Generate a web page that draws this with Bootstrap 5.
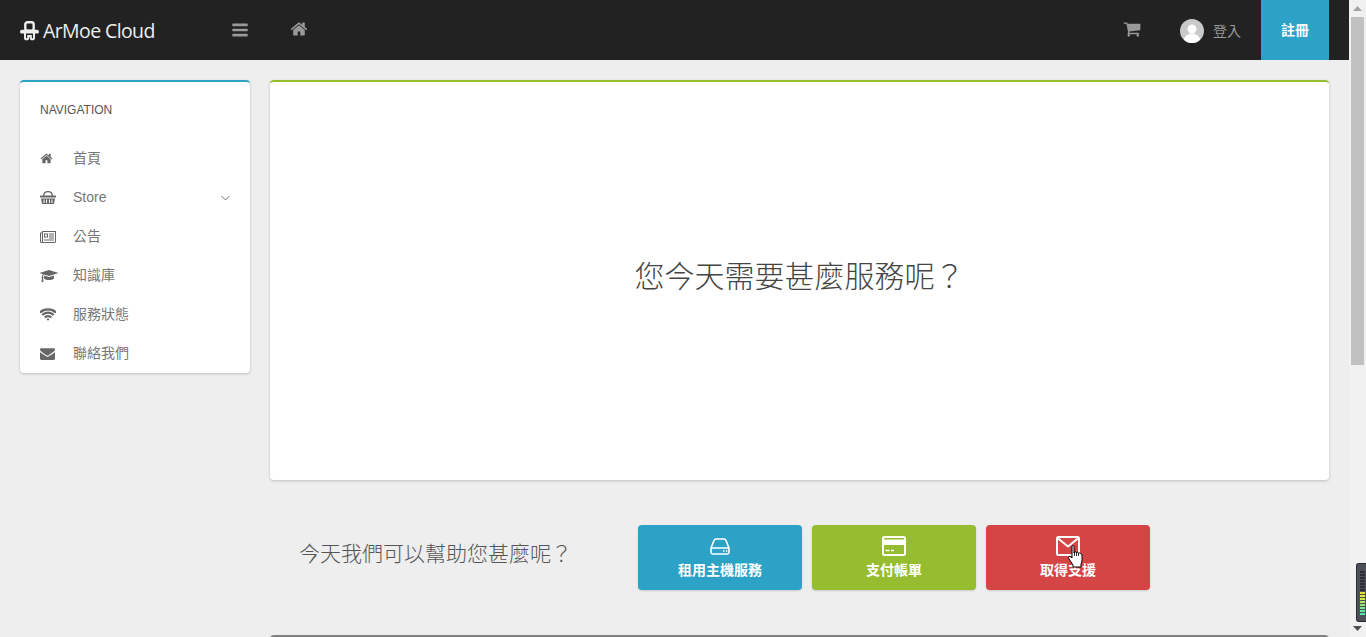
<!DOCTYPE html>
<html lang="zh-Hant">
<head>
<meta charset="utf-8">
<title>ArMoe Cloud</title>
<link href="https://cdn.jsdelivr.net/npm/bootstrap@5.3.0/dist/css/bootstrap.min.css" rel="stylesheet">
<style>
html,body{height:637px;overflow:hidden}
body{background:#eee;font-family:"Liberation Sans","Noto Sans CJK TC",sans-serif;color:#555;display:flex}
.page-shell{width:1349px;flex:none;height:637px;overflow:hidden}
.top-bar{height:60px;background:#222;padding:0 20px;flex-wrap:nowrap;align-items:stretch}
.logo-area{width:211px;display:flex;align-items:center;gap:4px;color:#eee;font-family:"Open Sans",sans-serif;font-size:19.5px;letter-spacing:-.6px;text-decoration:none;padding-top:1px}
.top-icon{fill:#999;display:block}
.burger-slot{width:50px;display:flex;align-items:center}
.home-slot{margin-left:9px;width:18px;display:flex;align-items:center;margin-top:-3px}
.cart-slot{display:flex;align-items:center;margin-right:39px;margin-top:-2px}
.login-slot{display:flex;align-items:center;gap:9px;font-size:14px;color:#999;margin-right:20px;margin-top:2px}
.avatar-disc{width:24px;height:24px;border-radius:50%;background:#c9c9c9;overflow:hidden;display:block}
.signup-btn{width:68px;background:#2ba2c6;color:#fff;font-size:14px;font-weight:700;border-radius:0;border:0;display:flex;align-items:center;justify-content:center;padding:0}
.signup-btn:hover{background:#2ba2c6;color:#fff}
.content-wrap{padding:20px 20px 0;gap:20px;align-items:flex-start}
.side-card{width:230px;flex:none;border:0;border-top:2px solid #2ba2c6;border-radius:4px;box-shadow:0 1px 3px rgba(0,0,0,.2);height:293px}
.side-title{font-size:12px;color:#555;padding:20px 20px 0;line-height:16px;height:57px}
.card>.side-list{border-top:0;border-bottom:0;border-radius:0 0 4px 4px}
.side-item{border:0;height:39px;padding:0 20px;display:flex;align-items:center;font-size:14px;color:#777;background:transparent}
.side-ico{width:33px;flex:none;display:flex;align-items:center}
.side-ico svg{fill:#666;display:block}
.chev-mark{margin-left:auto}
.main-col{flex:1;min-width:0}
.hero-card{height:400px;border:0;border-top:2px solid #95bd2f;border-radius:4px;box-shadow:0 1px 3px rgba(0,0,0,.2);display:flex;align-items:center;justify-content:center}
.hero-text{font-size:30px;font-weight:300;color:#444;margin:0 0 8px;line-height:1.2}
.help-row{margin-top:45px;padding-left:29px;height:65px;display:flex;align-items:center}
.help-text{font-size:21px;font-weight:300;color:#555;width:339px;flex:none;margin:0;line-height:1.2;padding-bottom:7px}
.act-row{column-gap:10px}
.act-btn{width:164px;height:65px;border:0;border-radius:4px;color:#fff;font-size:14px;font-weight:700;padding:11px 0 0;display:flex;flex-direction:column;align-items:center;line-height:16px;box-shadow:0 1px 2px rgba(0,0,0,.15);position:relative}
.act-glyph{height:20px;margin-bottom:6px;display:flex;align-items:center}
.act-glyph svg{display:block;fill:none;stroke:#fff;stroke-width:2}
.act-blue,.act-blue:hover{background:#2ba2c6;color:#fff}
.act-green,.act-green:hover{background:#95bd2f;color:#fff}
.act-red,.act-red:hover{background:#d64545;color:#fff}
.hand-cursor{position:absolute;left:82px;top:20px}
.next-card{margin-top:45px;height:40px;border:0;border-top:2px solid #808080;border-radius:4px 4px 0 0}
.scroll-rail{width:17px;flex:none;height:637px;background:#f1f1f1;position:relative;display:flex;flex-direction:column}
.rail-cap{height:17px;display:flex;align-items:center;justify-content:center;flex:none}
.rail-thumb{height:348px;background:#c1c1c1;margin:0 2px;flex:none}
.rail-gap{flex:1}
.meter-widget{position:absolute;left:7px;top:563px;width:10px;height:59px;background:#4e5059;border:1px solid #2b2c30;border-right:0;border-radius:3px 0 0 3px;padding:7px 0 0 3px;display:flex;flex-direction:column;gap:1px}
.meter-widget span{display:block;height:2px;width:5px}
</style>
</head>
<body>
<div class="page-shell">
  <nav class="navbar top-bar">
    <div class="d-flex flex-fill align-items-stretch">
      <a class="logo-area" href="#">
        <svg width="19" height="20" viewBox="0 0 19 20"><rect x="5.300" y="1.200" width="8.400" height="8.600" rx="2.200" fill="none" stroke="#eee" stroke-width="2.400"/><rect x="0" y="8.800" width="19" height="3.800" rx="1.900" fill="#eee"/><path d="M5 12v4.700a1.600 1.600 0 0 0 3.200 0V15h2.600v1.700a1.600 1.600 0 0 0 3.200 0V12" fill="none" stroke="#eee" stroke-width="2"/></svg>
        <span>ArMoe Cloud</span>
      </a>
      <div class="burger-slot"><svg class="top-icon" width="18" height="18" viewBox="0 0 1792 1792"><path d="M1664 1344v128q0 26-19 45t-45 19h-1408q-26 0-45-19t-19-45v-128q0-26 19-45t45-19h1408q26 0 45 19t19 45zm0-512v128q0 26-19 45t-45 19h-1408q-26 0-45-19t-19-45v-128q0-26 19-45t45-19h1408q26 0 45 19t19 45zm0-512v128q0 26-19 45t-45 19h-1408q-26 0-45-19t-19-45v-128q0-26 19-45t45-19h1408q26 0 45 19t19 45z"/></svg></div>
      <div class="home-slot"><svg class="top-icon" width="18" height="18" viewBox="0 0 1792 1792"><path d="M1472 992v480q0 26-19 45t-45 19h-384v-384h-256v384h-384q-26 0-45-19t-19-45v-480q0-1 .5-3t.5-3l575-474 575 474q1 2 1 6zm223-69l-62 74q-8 9-21 11h-3q-13 0-21-7l-692-577-692 577q-12 8-24 7-13-2-21-11l-62-74q-8-10-7-23.500t11-21.500l719-599q32-26 76-26t76 26l244 204v-195q0-14 9-23t23-9h192q14 0 23 9t9 23v408l219 182q10 8 11 21.500t-7 23.500z"/></svg></div>
      <div class="ms-auto d-flex align-items-stretch">
        <div class="cart-slot"><svg class="top-icon" width="18" height="18" viewBox="0 0 1792 1792"><path d="M704 1536q0 52-38 90t-90 38-90-38-38-90 38-90 90-38 90 38 38 90zm896 0q0 52-38 90t-90 38-90-38-38-90 38-90 90-38 90 38 38 90zm128-1088v512q0 24-16.500 42.500t-40.500 21.500l-1044 122q13 60 13 70 0 16-24 64h920q26 0 45 19t19 45-19 45-45 19h-1024q-26 0-45-19t-19-45q0-11 8-31.500t16-36 21.500-40 15.500-29.500l-177-823h-204q-26 0-45-19t-19-45 19-45 45-19h256q16 0 28.500 6.500t19.500 15.500 13 24.500 8 26 5.500 29.500 4.500 26h1201q26 0 45 19t19 45z"/></svg></div>
        <div class="login-slot">
          <svg class="avatar-disc" viewBox="0 0 24 24"><circle cx="12" cy="10" r="4.500" fill="#fff"/><ellipse cx="12" cy="21" rx="8" ry="6.500" fill="#fff"/></svg>
          <span>登入</span>
        </div>
        <a class="btn signup-btn" href="#">註冊</a>
      </div>
    </div>
  </nav>
  <div class="d-flex content-wrap">
    <div class="card side-card">
      <div class="side-title">NAVIGATION</div>
      <div class="list-group list-group-flush side-list">
        <a class="list-group-item side-item" href="#"><span class="side-ico"><svg width="13" height="13" viewBox="0 0 1792 1792"><path d="M1472 992v480q0 26-19 45t-45 19h-384v-384h-256v384h-384q-26 0-45-19t-19-45v-480q0-1 .5-3t.5-3l575-474 575 474q1 2 1 6zm223-69l-62 74q-8 9-21 11h-3q-13 0-21-7l-692-577-692 577q-12 8-24 7-13-2-21-11l-62-74q-8-10-7-23.500t11-21.500l719-599q32-26 76-26t76 26l244 204v-195q0-14 9-23t23-9h192q14 0 23 9t9 23v408l219 182q10 8 11 21.500t-7 23.500z"/></svg></span>首頁</a>
        <a class="list-group-item side-item" href="#"><span class="side-ico"><svg width="16" height="15" viewBox="0 0 16 15"><path d="M3 6Q3 1 8 1t5 5h-1.300Q11.700 2.300 8 2.300T4.300 6z"/><rect x="0" y="5.500" width="16" height="2" rx=".5"/><path d="M1 8.500h14l-1 5.500H2zM3.500 9.500v3.500h1v-3.500zM6 9.500v3.500h1v-3.500zM9 9.500v3.500h1v-3.500zM11.500 9.500v3.500h1v-3.500z" fill-rule="evenodd"/></svg></span>Store<svg class="chev-mark" width="9" height="6" viewBox="0 0 9 6"><path d="M.5 1l4 4 4-4" fill="none" stroke="#777"/></svg></a>
        <a class="list-group-item side-item" href="#"><span class="side-ico"><svg width="16" height="12" viewBox="0 0 16 12"><path fill-rule="evenodd" d="M0 1.500V10.500Q0 12 1.500 12h13Q16 12 16 10.500V0H2v1.500zM1 2.500h1V10.500a.5.500 0 0 1-1 0zM3 1h12v9.500q0 .5-.5.5H2.900Q3 10.800 3 10.500zM4 2.500v4h4v-4zM5 3.500h2v2H5zM9 2.500v1h5v-1zM9 4.500v1h5v-1zM9 6.500v1h5v-1zM4 8.500v1h10v-1z"/></svg></span>公告</a>
        <a class="list-group-item side-item" href="#"><span class="side-ico"><svg width="18" height="14" viewBox="0 0 2304 1792"><path d="M1774 836l18 316q4 69-82 128t-235 93.500-323 34.500-323-34.500-235-93.500-82-128l18-316 574 181q22 7 48 7t48-7zm530-324q0 23-22 31l-1120 352q-4 1-10 1t-10-1l-652-206q-43 34-71 111.500t-34 178.500q63 36 63 109 0 69-58 107l58 433q2 14-8 25-9 11-24 11h-192q-15 0-24-11-10-11-8-25l58-433q-58-38-58-107 0-73 65-111 11-207 98-330l-333-104q-22-8-22-31t22-31l1120-352q4-1 10-1t10 1l1120 352q22 8 22 31z"/></svg></span>知識庫</a>
        <a class="list-group-item side-item" href="#"><span class="side-ico"><svg width="16" height="16" viewBox="0 0 1792 1792"><path d="M896 1523q-20 0-93-73.500t-73-93.500q0-32 62.500-54t103.500-22 103.500 22 62.500 54q0 20-73 93.500t-93 73.500zm270-271q-2 0-40-25t-101.500-50-128.500-25-128.500 25-101 50-40.500 25q-18 0-93.500-75t-75.500-93q0-13 10-23 78-77 196-121t233-44 233 44 196 121q10 10 10 23 0 18-75.500 93t-93.500 75zm273-272q-11 0-23-8-136-105-252-154.500t-268-49.500q-85 0-170.500 22t-149 53-113.500 62-79 53-31 22q-17 0-92-75t-75-93q0-12 10-22 132-132 320-205t380-73 380 73 320 205q10 10 10 22 0 18-75 93t-92 75zm271-271q-11 0-22-9-179-157-371.500-236.500t-420.500-79.500-420.500 79.500-371.500 236.500q-11 9-22 9-17 0-92.500-75t-75.500-93q0-13 10-23 187-186 445-288t527-102 527 102 445 288q10 10 10 23 0 18-75.500 93t-92.500 75z"/></svg></span>服務狀態</a>
        <a class="list-group-item side-item" href="#"><span class="side-ico"><svg width="15" height="15" viewBox="0 0 1792 1792"><path d="M1792 710v794q0 66-47 113t-113 47h-1472q-66 0-113-47t-47-113v-794q44 49 101 87 362 246 497 345 57 42 92.500 65.500t94.500 48 110 24.500h2q51 0 110-24.500t94.500-48 92.500-65.500q170-123 498-345 57-39 100-87zm0-294q0 79-49 151t-122 123q-376 261-468 325-10 7-42.500 30.500t-54 38-52 32.500-57.500 27-50 9h-2q-23 0-50-9t-57.500-27-52-32.500-54-38-42.500-30.500q-91-64-262-182.500t-205-142.500q-62-42-117-115.500t-55-136.500q0-78 41.500-130t118.500-52h1472q65 0 112.500 47t47.500 113z"/></svg></span>聯絡我們</a>
      </div>
    </div>
    <div class="main-col">
      <div class="card hero-card"><h2 class="hero-text">您今天需要甚麼服務呢？</h2></div>
      <div class="help-row">
        <h3 class="help-text">今天我們可以幫助您甚麼呢？</h3>
        <div class="d-flex act-row">
          <a class="btn act-btn act-blue" href="#"><span class="act-glyph"><svg width="20" height="17" viewBox="0 0 20 17" style="stroke-width:1.600"><path d="M1 10 4 2.500Q4.500 1 6 1h8q1.500 0 2 1.500L19 10v4q0 2-2 2H3q-2 0-2-2zM1 10h18"/><path d="M13 13h1.500M15.800 13h1.500" stroke-width="1.300"/></svg></span>租用主機服務</a>
          <a class="btn act-btn act-green" href="#"><span class="act-glyph"><svg width="24" height="20" viewBox="0 0 24 20"><rect x="1" y="1" width="22" height="18" rx="1.500"/><path d="M1 4.500h22v3.500H1z" fill="#fff"/><path d="M3.500 14.500h4M9 14.500h3" stroke-width="1.500"/></svg></span>支付帳單</a>
          <a class="btn act-btn act-red" href="#"><span class="act-glyph"><svg width="24" height="20" viewBox="0 0 24 20"><rect x="1" y="1" width="22" height="18" rx="1.500"/><path d="M1.500 2 12 10.500 22.500 2"/></svg></span>取得支援
            <svg class="hand-cursor" width="16" height="23" viewBox="0 0 16 23"><path d="M4 1.500Q4 .5 5 .5T6 1.500V8l.5-1q1.500-.5 2 .5 1.500-.5 2 .5 1.500-.5 2 .5 1.500 0 1.500 2v4q0 3-1 4.500V22H5v-2L.8 13.500Q0 12 1 11.500t2 .5L4 13z" fill="#fff" stroke="#000"/><path d="M6.500 7v4M8.500 7.500V11M10.500 8V11" stroke="#000" stroke-width=".8" fill="none"/></svg>
          </a>
        </div>
      </div>
      <div class="card next-card"></div>
    </div>
  </div>
</div>
<aside class="scroll-rail">
  <div class="rail-cap"><svg width="9" height="5" viewBox="0 0 9 5"><path d="M4.500 0 9 5H0z" fill="#a3a3a3"/></svg></div>
  <div class="rail-thumb"></div>
  <div class="rail-gap"></div>
  <div class="rail-cap"><svg width="9" height="5" viewBox="0 0 9 5"><path d="M0 0h9L4.500 5z" fill="#505050"/></svg></div>
  <div class="meter-widget">
    <span style="background:#2b2c30"></span><span style="background:#2b2c30"></span><span style="background:#2b2c30"></span><span style="background:#2b2c30"></span><span style="background:#2b2c30"></span><span style="background:#2b2c30"></span><span style="background:#2b2c30"></span>
    <span style="background:#e6e04a"></span><span style="background:#dfe44f"></span><span style="background:#cfe657"></span><span style="background:#b6e663"></span><span style="background:#96e677"></span><span style="background:#7be68c"></span><span style="background:#62e6a0"></span><span style="background:#55e6ad"></span>
  </div>
</aside>
<script src="https://cdn.jsdelivr.net/npm/bootstrap@5.3.0/dist/js/bootstrap.bundle.min.js"></script>
</body>
</html>
